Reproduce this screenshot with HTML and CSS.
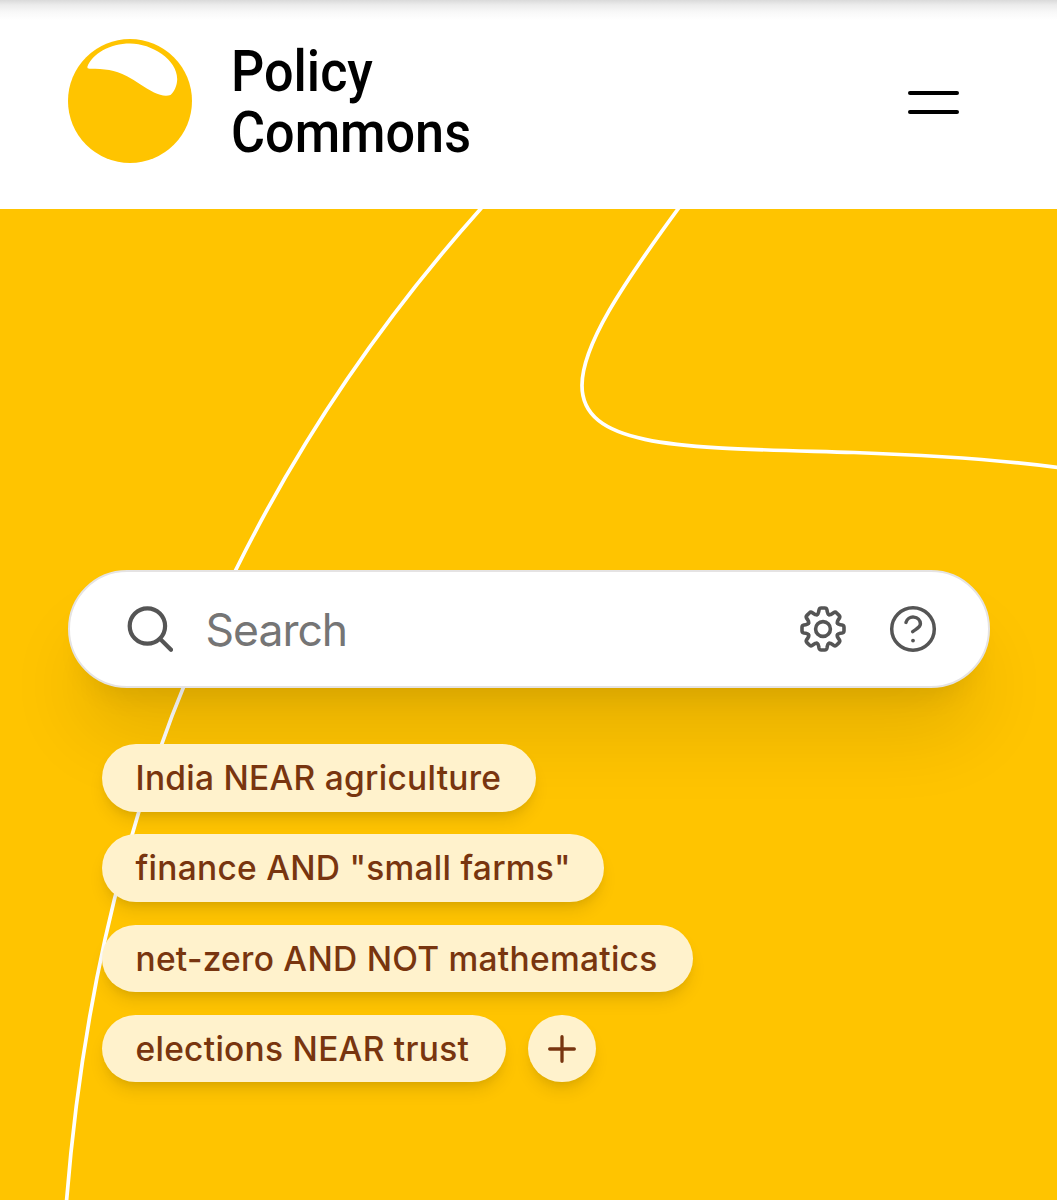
FILE: index.html
```html
<!DOCTYPE html>
<html lang="en">
<head>
<meta charset="utf-8">
<title>Policy Commons</title>
<link rel="stylesheet" href="styles.css">
</head>
<body>
<header class="header">
  <a class="brand">
    <svg class="brand-mark" viewBox="0 0 124 124">
      <circle cx="62" cy="62" r="62" fill="#ffc400"/>
      <path d="M19.300 28C24 15 42 4.600 62 4.600C84 4.600 109.200 21 109.200 40C109.200 47 106 53 102.500 56C98 57.500 92 56.500 86 53.500C76 48.500 68 42 59 37.300C46 30.500 37 30 21.500 29.800Q19 29.500 19.300 28Z" fill="#fff"/>
    </svg>
    <span class="brand-name"><span class="brand-top">Policy</span><span class="brand-bottom">Commons</span></span>
  </a>
  <button class="menu" aria-label="Menu"><span class="bar"></span><span class="bar"></span></button>
</header>
<main class="hero">
  <svg class="contours" viewBox="0 208.500 1057 991.500" fill="none" stroke="#fff" stroke-width="3.700">
    <path d="M483.500 205L480.500 208.500C384.500 316 301.500 436 235.500 570C144.500 755 86.500 950 66.500 1201"/>
    <path d="M681 204L678 208.500C622 285 582 345 582 385C582 450 690 447 854 452C940 455 1005 460 1058 467"/>
  </svg>
  <form class="search">
    <svg class="icon search-icon" viewBox="0 0 48 48" stroke-width="4.200">
      <circle cx="22.400" cy="21" r="17.700"/><path d="M35.200 33.900L46 44.700"/>
    </svg>
    <input class="search-input" type="text" placeholder="Search" aria-label="Search">
    <svg class="icon" viewBox="-24 -24 48 48" stroke-width="3.600">
      <defs><path id="tooth" d="M-5.970-14.400C-4.700-14.950-4.500-16-4.300-17.200L-4-19Q-3.600-21-1.700-21L1.700-21Q3.600-21 4-19L4.300-17.200C4.500-16 4.700-14.950 5.970-14.400"/></defs>
      <circle r="7.400"/>
      <use href="#tooth"/><use href="#tooth" transform="rotate(45)"/><use href="#tooth" transform="rotate(90)"/><use href="#tooth" transform="rotate(135)"/><use href="#tooth" transform="rotate(180)"/><use href="#tooth" transform="rotate(225)"/><use href="#tooth" transform="rotate(270)"/><use href="#tooth" transform="rotate(315)"/>
    </svg>
    <svg class="icon" viewBox="-24 -24 48 48" stroke-width="3.500">
      <circle r="21.300"/>
      <path d="M-7-6.600A7.300 6.900 0 0 1 7.400-5.200C7.400-1.500 3.500-.3-.3 2.600"/>
      <circle cx="0" cy="11.600" r="1.900" fill="#555" stroke="none"/>
    </svg>
  </form>
  <div class="tags">
    <a class="tag india">India NEAR agriculture</a>
    <a class="tag finance">finance AND "small farms"</a>
    <a class="tag netzero">net-zero AND NOT mathematics</a>
    <a class="tag elections">elections NEAR trust</a>
    <button class="tag add" aria-label="More"><svg class="plus" viewBox="0 0 30 30"><path d="M15 2.700V27.300M2.700 15H27.300"/></svg></button>
  </div>
</main>
</body>
</html>
```
FILE: styles.css
```css
* { box-sizing: border-box; }
body {
  margin: 0;
  width: 1057px;
  height: 1200px;
  overflow: hidden;
  background: #fff;
  font-family: Inter, "Liberation Sans", sans-serif;
}
.header {
  height: 208.5px;
  padding: 39px 98.5px 0 67.5px;
  display: flex;
  justify-content: space-between;
  align-items: flex-start;
  background: linear-gradient(#dadada 0, #ececec 5px, #f8f8f8 12px, #fff 20px);
}
.brand { display: flex; gap: 39px; }
.brand-mark { width: 124px; height: 124px; }
.brand-name {
  display: flex;
  flex-direction: column;
  padding-top: 3px;
  font: 500 57px/60.5px Roboto, sans-serif;
  color: #000;
  transform: scaleX(.915);
  transform-origin: 0 0;
}
.menu {
  width: 51px;
  margin-top: 51.5px;
  padding: 0;
  border: 0;
  background: none;
  display: flex;
  flex-direction: column;
  gap: 14.5px;
}
.bar { height: 4.5px; border-radius: 3px; background: #000; }
.hero {
  position: relative;
  height: 991.5px;
  padding: 361px 67.5px 0;
  background: #ffc400;
}
.contours { position: absolute; inset: 0; width: 1057px; height: 991.5px; }
.search {
  position: relative;
  height: 118px;
  padding: 0 51px 0 55px;
  display: flex;
  align-items: center;
  border: 2px solid #e5e3e3;
  border-radius: 59px;
  background: #fff;
  box-shadow: 0 56px 74px -9px rgba(0,0,0,.1), 0 22px 28px -17px rgba(0,0,0,.1);
}
.icon { width: 48px; height: 48px; flex: none; fill: none; stroke: #555; stroke-linecap: round; stroke-linejoin: round; }
.icon + .icon { margin-left: 42px; }
.search-input {
  flex: 1;
  min-width: 0;
  margin-left: 33px;
  padding: 3px 0 0;
  border: 0;
  outline: 0;
  background: none;
  font: 400 44.5px/56px Inter, sans-serif;
  letter-spacing: -1px;
}
.search-input::placeholder { color: #757575; opacity: 1; }
.tags {
  position: relative;
  width: 700px;
  margin: 56.5px 0 0 34px;
  display: flex;
  flex-wrap: wrap;
  gap: 22.7px;
}
.tag {
  height: 67.6px;
  border: 0;
  border-radius: 34px;
  padding: 1px 0 0 34px;
  background: #fff2cc;
  color: #78350f;
  box-shadow: 0 11px 17px -3px rgba(0,0,0,.1), 0 5.6px 11px -5.6px rgba(0,0,0,.1);
  font-size: 33.5px;
  font-weight: 450;
  letter-spacing: .27px;
  line-height: 67.6px;
  white-space: nowrap;
}
.india { width: 434px; margin-right: 200px; }
.finance { width: 502.5px; margin-right: 150px; }
.netzero { width: 591px; }
.elections { width: 404px; }
.add { width: 67.6px; padding: 0; display: flex; align-items: center; justify-content: center; }
.plus { width: 30px; height: 30px; fill: none; stroke: #78350f; stroke-width: 3.3; stroke-linecap: round; }
```
